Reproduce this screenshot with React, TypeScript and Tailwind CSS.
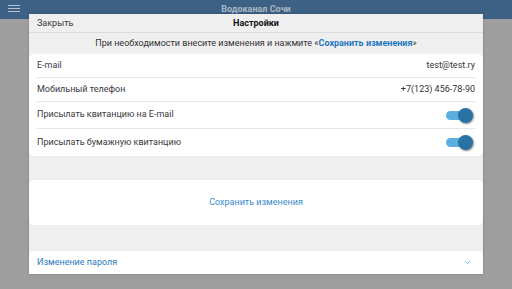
import { ChevronDown } from "lucide-react";

function Toggle() {
  return (
    <div className="relative mr-[2px] h-[15px] w-[27px]">
      <div className="absolute left-0 top-[3px] h-[9px] w-[22px] rounded-full bg-[#5caee0]" />
      <div className="absolute right-0 top-0 h-[15px] w-[15px] rounded-full bg-[#2873a3] shadow-[1px_1px_2px_rgba(0,0,0,0.45)]" />
    </div>
  );
}

function Row({ label, children, tall, last }: { label: string; children: React.ReactNode; tall?: boolean; last?: boolean }) {
  return (
    <div
      className={`flex items-center justify-between ${tall ? "h-[27px]" : "h-[24px]"} ${last ? "" : "border-b border-[#e6e6e6]"}`}
    >
      <span className="text-[9px] text-[#3a3a3a]">{label}</span>
      {children}
    </div>
  );
}

export default function App() {
  return (
    <div className="relative h-[289px] w-[512px] overflow-hidden bg-[#9e9e9e] font-['Roboto',sans-serif]">
      <div className="relative flex h-[19px] items-start justify-center bg-[#3d6184] pt-[5px]">
        <div className="absolute left-[8px] top-[5px] flex w-[12px] flex-col gap-[2px]">
          <div className="h-[1px] bg-[#b5c2cf]" />
          <div className="h-[1px] bg-[#b5c2cf]" />
          <div className="h-[1px] bg-[#b5c2cf]" />
        </div>
        <span className="text-[9px] font-bold leading-none text-[#a9b7c6]">Водоканал Сочи</span>
      </div>

      <div className="absolute left-[29px] top-[14px] flex h-[260px] w-[454px] flex-col bg-[#efefef] shadow-[0_0_2px_rgba(0,0,0,0.25)]">
        <div className="relative flex h-[19px] shrink-0 items-center justify-center border-b border-[#dcdcdc] pt-[2px]">
          <span className="absolute left-[8px] text-[9px] text-[#3a3a3a]">Закрыть</span>
          <span className="text-[9px] font-bold text-[#111]">Настройки</span>
        </div>
        <div className="flex h-[21px] shrink-0 items-center justify-center text-[9px] text-[#333]">
          При необходимости внесите изменения и нажмите «
          <span className="font-bold text-[#1f78c1]">Сохранить изменения</span>»
        </div>

        <div className="shrink-0 rounded-[5px] bg-white px-[8px]">
          <Row label="E-mail">
            <span className="text-[9px] text-[#333]">test@test.ry</span>
          </Row>
          <Row label="Мобильный телефон">
            <span className="text-[9px] text-[#333]">+7(123) 456-78-90</span>
          </Row>
          <Row label="Присылать квитанцию на E-mail" tall>
            <Toggle />
          </Row>
          <Row label="Присылать бумажную квитанцию" tall last>
            <Toggle />
          </Row>
        </div>

        <div className="mt-[24px] flex h-[45px] shrink-0 items-center justify-center rounded-[5px] bg-white">
          <span className="text-[9px] text-[#3a8bd0]">Сохранить изменения</span>
        </div>

        <div className="mt-[26px] flex h-[23px] shrink-0 items-center justify-between rounded-t-[5px] bg-white pl-[8px] pr-[11px]">
          <span className="text-[9px] text-[#2a7bc2]">Изменение пароля</span>
          <ChevronDown className="h-[9px] w-[9px] text-[#5a9bd5]" strokeWidth={2} />
        </div>
      </div>
    </div>
  );
}
